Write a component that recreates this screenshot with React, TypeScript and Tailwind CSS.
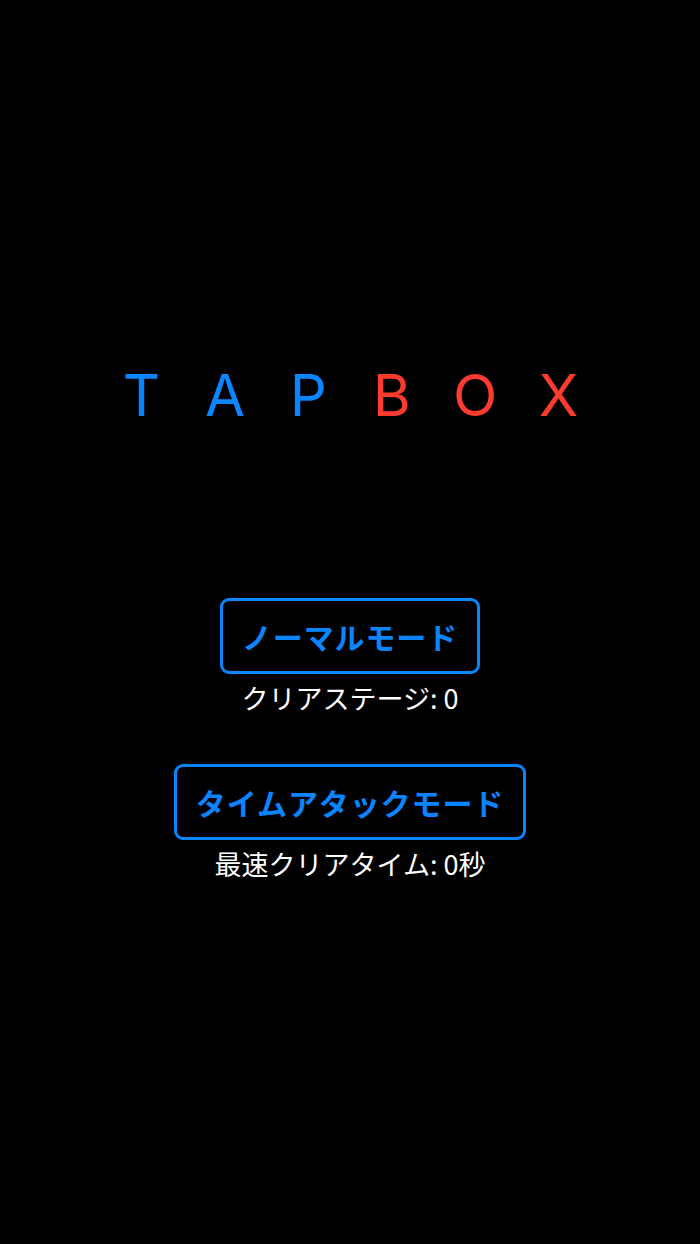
import * as React from "react";

const letters = [
  { ch: "T", color: "text-[#0a84ff]" },
  { ch: "A", color: "text-[#0a84ff]" },
  { ch: "P", color: "text-[#0a84ff]" },
  { ch: "B", color: "text-[#ff3b30]" },
  { ch: "O", color: "text-[#ff3b30]" },
  { ch: "X", color: "text-[#ff3b30]" },
];

const modes = [
  { label: "ノーマルモード", record: "クリアステージ: 0" },
  { label: "タイムアタックモード", record: "最速クリアタイム: 0秒" },
];

const jp = { fontFamily: '"Noto Sans CJK JP", "Noto Sans", sans-serif' };

const App: React.FunctionComponent = () => {
  return (
    <div className="w-[700px] h-[1244px] bg-black flex flex-col items-center">
      <h1
        className="mt-[360px] flex h-[70px] items-center text-[58px] font-normal leading-none"
        style={{ fontFamily: "Inter, sans-serif" }}
      >
        {letters.map((l) => (
          <span key={l.ch} className={`w-[83.4px] text-center ${l.color}`}>
            {l.ch}
          </span>
        ))}
      </h1>

      <div className="mt-[168px] flex flex-col items-center gap-[48px]" style={jp}>
        {modes.map((m) => (
          <div key={m.label} className="flex flex-col items-center">
            <button className="h-[76px] px-[19px] rounded-[9px] border-[3px] border-[#0a84ff] text-[#0a84ff] text-[30px] tracking-[0.9px] font-bold leading-none cursor-pointer">
              {m.label}
            </button>
            <p className="mt-[5px] text-white text-[27px] leading-[37px]">{m.record}</p>
          </div>
        ))}
      </div>
    </div>
  );
};

export default App;
